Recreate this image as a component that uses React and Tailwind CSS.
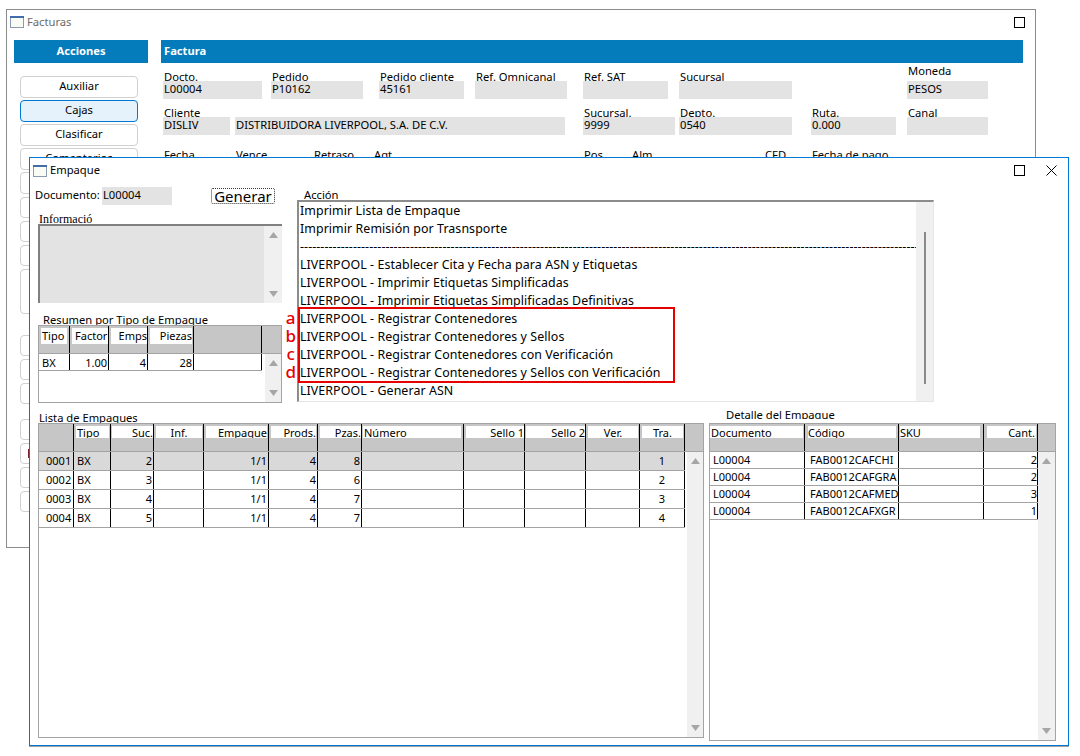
import React from "react";

const hd = "bg-white h-[12px] mt-[2px] leading-[14px] overflow-hidden whitespace-nowrap";

const listaCols = [
  { w: "w-[35px]", label: "", cell: "pl-[7px]" },
  { w: "w-[37px]", label: "Tipo", box: "ml-[2px] mr-[1px] pl-[1px]", cell: "pl-[3px]" },
  { w: "w-[43px]", label: "Suc.", box: "ml-[1px] text-right", cell: "text-right pr-[1px]" },
  { w: "w-[50px]", label: "Inf.", box: "ml-[2px] mr-[1px] text-center", cell: "" },
  { w: "w-[65px]", label: "Empaque", box: "ml-[2px] mr-[1px] text-right", cell: "text-right pr-[1px]" },
  { w: "w-[49px]", label: "Prods.", box: "ml-[2px] mr-[1px] text-right", cell: "text-right pr-[1px]" },
  { w: "w-[44px]", label: "Pzas.", box: "ml-[2px] text-right", cell: "text-right pr-[1px]" },
  { w: "w-[102px]", label: "Número", box: "ml-[1px] mr-[2px] pl-[1px]", cell: "" },
  { w: "w-[61px]", label: "Sello 1", box: "ml-[2px] text-right", cell: "" },
  { w: "w-[61px]", label: "Sello 2", box: "ml-[1px] text-right", cell: "" },
  { w: "w-[54px]", label: "Ver.", box: "ml-[2px] mr-[1px] text-center", cell: "" },
  { w: "w-[45px]", label: "Tra.", box: "ml-[2px] mr-[1px] text-center", cell: "text-center" },
];

const listaRows = [
  ["0001", "BX", "2", "", "1/1", "4", "8", "", "", "", "", "1"],
  ["0002", "BX", "3", "", "1/1", "4", "6", "", "", "", "", "2"],
  ["0003", "BX", "4", "", "1/1", "4", "7", "", "", "", "", "3"],
  ["0004", "BX", "5", "", "1/1", "4", "7", "", "", "", "", "4"],
];

const detalleCols = [
  { w: "w-[95px]", label: "Documento", box: "pl-[1px] mr-[1px]", cell: "pl-[3px]" },
  { w: "w-[94px]", label: "Código", box: "ml-[3px] mr-[2px]", cell: "pl-[5px]" },
  { w: "w-[85px]", label: "SKU", box: "ml-[1px] mr-[3px]", cell: "" },
  { w: "w-[54px]", label: "Cant.", box: "ml-[3px] mr-[1px] text-right pr-[1px]", cell: "text-right" },
];

const detalleRows = [
  ["L00004", "FAB0012CAFCHI", "", "2"],
  ["L00004", "FAB0012CAFGRA", "", "2"],
  ["L00004", "FAB0012CAFMED", "", "3"],
  ["L00004", "FAB0012CAFXGR", "", "1"],
];

const resumenCols = [
  { w: "w-[31px]", label: "Tipo", box: "ml-[2px] mr-[2px] pl-[1px]", cell: "pl-[3px]" },
  { w: "w-[39px]", label: "Factor", box: "ml-[2px] pl-[3px]", cell: "text-right pr-[1px]" },
  { w: "w-[39px]", label: "Emps", box: "ml-[2px] text-right", cell: "text-right pr-[1px]" },
  { w: "w-[46px]", label: "Piezas", box: "ml-[2px] mr-[1px] text-right", cell: "text-right pr-[1px]" },
  { w: "w-[68px]", label: null, cell: "" },
];

const acciones = [
  "Imprimir Lista de Empaque",
  "Imprimir Remisión por Trasnsporte",
  "-".repeat(170),
  "LIVERPOOL - Establecer Cita y Fecha para ASN y Etiquetas",
  "LIVERPOOL - Imprimir Etiquetas Simplificadas",
  "LIVERPOOL - Imprimir Etiquetas Simplificadas Definitivas",
  "LIVERPOOL - Registrar Contenedores",
  "LIVERPOOL - Registrar Contenedores y Sellos",
  "LIVERPOOL - Registrar Contenedores con Verificación",
  "LIVERPOOL - Registrar Contenedores y Sellos con Verificación",
  "LIVERPOOL - Generar ASN",
];

const btn = "rounded-[4px] border border-[#d0d0d0] bg-white shrink-0";

function WinIcon() {
  return (
    <svg width="14" height="12" viewBox="0 0 14 12" className="shrink-0">
      <rect x="0.5" y="0.5" width="13" height="11" fill="#fbfbf6" stroke="#8a9ab0" />
      <rect x="0" y="0" width="14" height="2" fill="#3f6ea8" />
    </svg>
  );
}

function MaxIcon() {
  return (
    <svg width="11" height="11" viewBox="0 0 11 11" className="shrink-0">
      <rect x="0.5" y="0.5" width="10" height="10" fill="none" stroke="#000" />
    </svg>
  );
}

function CloseIcon() {
  return (
    <svg width="11" height="11" viewBox="0 0 11 11" className="shrink-0">
      <path d="M0.5 0.5L10.5 10.5M10.5 0.5L0.5 10.5" fill="none" stroke="#000" />
    </svg>
  );
}

function Scrollbar({ className }) {
  return (
    <div className={"flex flex-col justify-between items-center bg-[#f0f0f0] shrink-0 " + className}>
      <svg width="9" height="6" viewBox="0 0 9 6">
        <path d="M4.5 0L9 6H0z" fill="#a6a6a6" />
      </svg>
      <svg width="9" height="6" viewBox="0 0 9 6">
        <path d="M0 0H9L4.5 6z" fill="#a6a6a6" />
      </svg>
    </div>
  );
}

function Field({ label, value, className, labelClass = "" }) {
  return (
    <div className={"shrink-0 " + className}>
      <div className={"h-[11px] overflow-visible leading-[14px] whitespace-nowrap pl-[1px] " + labelClass}>{label}</div>
      <div className="relative h-[18px] bg-[#e3e3e3] leading-[16px] pl-[1px] whitespace-nowrap overflow-hidden">{value}</div>
    </div>
  );
}

function DataGrid({ cols, rows, className, headH, boxClass, rowH, selected, barClass }) {
  return (
    <div className={"flex flex-col border border-[#a3a3a3] bg-white overflow-hidden text-[11px] " + className}>
      <div className={"flex shrink-0 bg-[#c6c6c6] border-b border-[#a3a3a3] " + headH}>
        {cols.map((c, i) => (
          <div key={i} className={"border-r border-black shrink-0 " + c.w}>
            {c.label && <div className={boxClass + " " + c.box}>{c.label}</div>}
          </div>
        ))}
      </div>
      <div className="flex flex-1 min-h-0 justify-between">
        <div>
          {rows.map((r, i) => (
            <div key={i} className={"flex w-fit border-b border-[#a3a3a3] " + (i === selected ? "bg-[#d9d9d9]" : "")}>
              {r.map((v, j) => (
                <div
                  key={j}
                  className={"border-r border-black shrink-0 overflow-hidden whitespace-nowrap " + rowH + " " + cols[j].w + " " + cols[j].cell}
                >
                  {v}
                </div>
              ))}
            </div>
          ))}
        </div>
        <Scrollbar className={barClass} />
      </div>
    </div>
  );
}

export default function App() {
  return (
    <div className="relative w-[1080px] h-[756px] bg-white overflow-hidden text-[11.2px] text-black font-['Noto_Sans',sans-serif]">
      {/* ventana de atras */}
      <div className="absolute left-[6px] top-[9px] w-[1030px] h-[539px] border border-[#8c8c8c] bg-white">
        <div className="flex items-center h-[24px] pl-[3px] pr-[10px]">
          <WinIcon />
          <span className="ml-[3px] flex-1 text-[#6b6b6b]">Facturas</span>
          <MaxIcon />
        </div>
        <div className="flex pl-[7px] pt-[6px]">
          <div className="w-[134px] shrink-0">
            <div className="h-[23px] bg-[#047bbb] text-white font-bold text-center leading-[22px]">Acciones</div>
            <div className="flex flex-col pl-[6px] pt-[13px] w-[124px]">
              <button className={btn + " h-[22px] pb-[2px]"}>Auxiliar</button>
              <button className="h-[22px] mt-[2px] pb-[2px] rounded-[4px] border border-[#0078d7] bg-[#e5f1fb]">Cajas</button>
              <button className={btn + " h-[22px] mt-[2px] pb-[2px]"}>Clasificar</button>
              <button className={btn + " h-[22px] mt-[2px] pb-[2px]"}>Comentarios</button>
              <button className={btn + " h-[22px] mt-[2px]"}></button>
              <button className={btn + " h-[21px] mt-[3px]"}></button>
              <button className={btn + " h-[21px] mt-[3px]"}></button>
              <button className={btn + " h-[21px] mt-[3px]"}></button>
              <button className={btn + " h-[45px] mt-[3px]"}></button>
              <button className={btn + " h-[21px] mt-[21px]"}></button>
              <button className={btn + " h-[21px] mt-[3px]"}></button>
              <button className={btn + " h-[21px] mt-[3px]"}></button>
              <button className={btn + " h-[21px] mt-[15px]"}></button>
              <button className={btn + " h-[21px] mt-[3px] flex items-center pl-[7px]"}>
                <span className="w-[1px] h-[9px] bg-[#7b1f2b]" />
              </button>
              <button className={btn + " h-[21px] mt-[3px]"}></button>
              <button className={btn + " h-[21px] mt-[3px]"}></button>
            </div>
          </div>
          <div className="ml-[13px] w-[862px]">
            <div className="h-[23px] bg-[#047bbb] text-white font-bold leading-[22px] pl-[3px]">Factura</div>
            <div className="flex pl-[2px] pt-[7px]">
              <Field label="Docto." value="L00004" className="w-[99px]" />
              <Field label="Pedido" value="P10162" className="w-[92px] ml-[9px]" />
              <Field label="Pedido cliente" value="45161" className="w-[85px] ml-[16px]" />
              <Field label="Ref. Omnicanal" value="" className="w-[92px] ml-[11px]" />
              <Field label="Ref. SAT" value="" className="w-[85px] ml-[16px]" />
              <Field label="Sucursal" value="" className="w-[113px] ml-[11px]" />
              <Field label="Moneda" value="PESOS" className="w-[81px] ml-[115px]" labelClass="-translate-y-[6px]" />
            </div>
            <div className="flex pl-[2px] pt-[7px]">
              <Field label="Cliente" value="DISLIV" className="w-[67px]" />
              <Field label="" value="DISTRIBUIDORA LIVERPOOL, S.A. DE C.V." className="w-[330px] ml-[5px]" />
              <Field label="Sucursal." value="9999" className="w-[92px] ml-[18px]" />
              <Field label="Depto." value="0540" className="w-[113px] ml-[4px]" />
              <Field label="Ruta." value="0.000" className="w-[85px] ml-[19px]" />
              <Field label="Canal" value="" className="w-[81px] ml-[11px]" />
            </div>
            <div className="flex pl-[3px] pt-[12px] leading-[15px]">
              <span className="w-[72px]">Fecha</span>
              <span className="w-[78px]">Vence</span>
              <span className="w-[60px]">Retraso</span>
              <span className="w-[210px]">Agt.</span>
              <span className="w-[48px]">Pos.</span>
              <span className="w-[133px]">Alm.</span>
              <span className="w-[47px]">CFD</span>
              <span>Fecha de pago</span>
            </div>
          </div>
        </div>
      </div>

      {/* ventana Empaque */}
      <div className="absolute left-[29px] top-[157px] w-[1040px] h-[589px] border border-[#0078d7] bg-white shadow-[0_1px_0_#a0a0a0]">
        <div className="flex items-center h-[25px] pl-[3px] pr-[11px]">
          <WinIcon />
          <span className="ml-[3px] flex-1">Empaque</span>
          <MaxIcon />
          <span className="ml-[21px]"><CloseIcon /></span>
        </div>
        <div className="flex pl-[8px] h-[220px]">
          <div className="w-[244px] shrink-0">
            <div className="flex mt-[4px] h-[18px] -ml-[3px]">
              <span className="w-[67px] leading-[16px]">Documento:</span>
              <span className="w-[70px] bg-[#e3e3e3] leading-[16px] pl-[1px]">L00004</span>
              <span className="ml-[39px] mt-[1px] w-[64px] h-[16px] border border-dotted border-[#333] rounded-[2px] text-[15px] leading-[15px] text-center">Generar</span>
            </div>
            <div className="mt-[8px] h-[11px] ml-[1px] text-[12px] leading-[13px] overflow-visible font-['Liberation_Serif',serif]">Informació</div>
            <div className="flex h-[79px] bg-[#e3e3e3] border-l-2 border-t-2 border-[#808080]">
              <div className="flex-1" />
              <Scrollbar className="w-[18px] py-[6px]" />
            </div>
            <div className="mt-[11px] h-[11px] ml-[5px] leading-[11px] overflow-hidden whitespace-nowrap">Resumen por Tipo de Empaque</div>
            <DataGrid
              cols={resumenCols}
              rows={[["BX", "1.00", "4", "28", ""]]}
              className="h-[78px]"
              headH="h-[28px]"
              boxClass="bg-white h-[16px] mt-[2px] leading-[16px] overflow-hidden whitespace-nowrap"
              rowH="h-[16px] leading-[17px]"
              barClass="w-[16px] py-[6px]"
            />
          </div>
          <div className="ml-[15px] w-[637px] shrink-0">
            <div className="mt-[5px] h-[12px] pl-[7px] leading-[14px]">Acción</div>
            <div className="relative flex h-[202px] text-[12.4px] tracking-[0.08px] border-l-2 border-t-2 border-[#8c8c8c] border-r border-b border-r-[#e6e6e6] border-b-[#e6e6e6]">
              <div className="flex-1 pl-[1px] min-w-0">
                {acciones.map((t) => (
                  <div key={t} className="h-[18px] leading-[18px] w-[616px] overflow-hidden whitespace-nowrap">{t}</div>
                ))}
              </div>
              <div className="flex justify-center w-[17px] shrink-0 pt-[30px] bg-[#f0f0f0]">
                <div className="w-[2px] h-[152px] bg-[#8a8a8a]" />
              </div>
              <div className="absolute left-[-1px] top-[105px] w-[377px] h-[76px] border-2 border-[#e60000]">
                <div className="absolute right-[100%] top-[0px] pr-[4px] text-[#e60000] text-[17px] font-medium tracking-normal text-center">
                  <div className="h-[18px] leading-[18px]">a</div>
                  <div className="h-[18px] leading-[18px]">b</div>
                  <div className="h-[18px] leading-[18px]">c</div>
                  <div className="h-[18px] leading-[18px]">d</div>
                </div>
              </div>
            </div>
          </div>
        </div>
        <div className="flex pl-[8px]">
          <div className="w-[666px] shrink-0 pt-[8px]">
            <div className="h-[12px] pl-[1px] leading-[14px] overflow-hidden">Lista de Empaques</div>
            <DataGrid
              cols={listaCols}
              rows={listaRows}
              selected={0}
              className="h-[315px]"
              headH="h-[28px]"
              boxClass={hd}
              rowH="h-[18px] leading-[17px]"
              barClass="w-[16px] py-[6px]"
            />
          </div>
          <div className="ml-[5px] w-[347px] shrink-0 pt-[5px]">
            <div className="h-[11px] pl-[17px] leading-[14px] overflow-hidden">Detalle del Empaque</div>
            <div className="h-[4px]" />
            <DataGrid
              cols={detalleCols}
              rows={detalleRows}
              className="h-[318px]"
              headH="h-[28px]"
              boxClass={hd}
              rowH="h-[16px] leading-[16px]"
              barClass="w-[17px] py-[6px]"
            />
          </div>
        </div>
      </div>
    </div>
  );
}
